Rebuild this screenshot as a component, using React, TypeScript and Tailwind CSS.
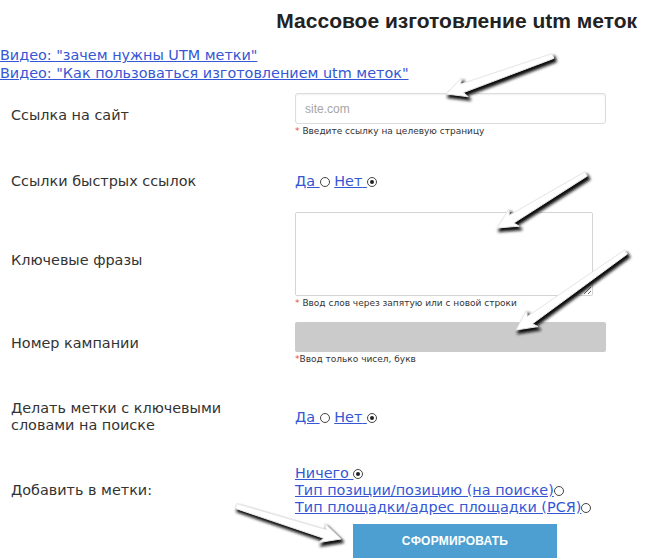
import React from "react";

const LINK = "text-[#3557d4] underline";
const BODY = "font-['DejaVu_Sans',Verdana,sans-serif]";

type ArrowProps = { x1: number; y1: number; x2: number; y2: number };

const arrowPoints = ({ x1, y1, x2, y2 }: ArrowProps) => {
  const dx = x2 - x1;
  const dy = y2 - y1;
  const len = Math.hypot(dx, dy);
  const ux = dx / len;
  const uy = dy / len;
  const nx = -uy;
  const ny = ux;
  const at = (d: number, w: number) =>
    `${(x1 + ux * d + nx * w).toFixed(1)},${(y1 + uy * d + ny * w).toFixed(1)}`;
  return [
    at(0, 2.5),
    at(len - 17, 4.5),
    at(len - 20, 10),
    at(len, 0),
    at(len - 20, -10),
    at(len - 17, -4.5),
    at(0, -2.5),
  ].join(" ");
};

const ARROWS: ArrowProps[] = [
  { x1: 553, y1: 56, x2: 446, y2: 94 },
  { x1: 586, y1: 174, x2: 497, y2: 228 },
  { x1: 626, y1: 252, x2: 516, y2: 330 },
  { x1: 236, y1: 506, x2: 341, y2: 539 },
];

const Arrows = () => {
  return (
    <svg className="absolute inset-0 pointer-events-none" width={650} height={559}>
      <defs>
        <filter id="blur" x="-20%" y="-20%" width="140%" height="140%">
          <feGaussianBlur stdDeviation="1.4" />
        </filter>
      </defs>
      {ARROWS.map((a, i) => (
        <g key={i}>
          <polygon
            points={arrowPoints(a)}
            transform="translate(2 3)"
            fill="#111"
            stroke="#111"
            strokeWidth={2}
            strokeLinejoin="round"
            filter="url(#blur)"
          />
          <polygon
            points={arrowPoints(a)}
            fill="#ffffff"
            stroke="#e6e6e6"
            strokeWidth={1}
            strokeLinejoin="round"
          />
        </g>
      ))}
    </svg>
  );
};

const Radio = ({ checked }: { checked?: boolean }) => {
  return (
    <span className="relative inline-block w-[10px] h-[10px] rounded-full border border-[#444] align-[-1px] bg-white">
      {checked && <span className="absolute left-[2px] top-[2px] w-[4px] h-[4px] rounded-full bg-[#222]" />}
    </span>
  );
};

const YesNo = () => {
  return (
    <div className="text-[14.4px] leading-[18px]">
      <a href="#" className={LINK}>
        Да{" "}
      </a>
      <Radio />{" "}
      <a href="#" className={LINK}>
        Нет{" "}
      </a>
      <Radio checked />
    </div>
  );
};

const Hint = ({ text, spaced = true }: { text: string; spaced?: boolean }) => {
  return (
    <div className="mt-[2px] text-[9px] leading-[11px] text-[#333]">
      <span className="text-[#e05050]">*</span>
      {spaced ? " " : ""}
      {text}
    </div>
  );
};

const Row = ({ label, children, className }: { label: React.ReactNode; children: React.ReactNode; className?: string }) => {
  return (
    <div className={`grid grid-cols-[295px_1fr] items-center ${className ?? ""}`}>
      <div className="pl-[11px] text-[14.4px] leading-[17px] text-[#333]">{label}</div>
      <div>{children}</div>
    </div>
  );
};

const App = () => {
  return (
    <div className={`relative w-[650px] h-[559px] overflow-hidden bg-white ${BODY}`}>
      <div className="flex justify-end pr-[13px] pt-[10px]">
        <h1 className="font-['Liberation_Sans',Arial,sans-serif] font-bold text-[21px] leading-[22px] text-[#222]">
          Массовое изготовление utm меток
        </h1>
      </div>

      <div className="mt-[14px] flex flex-col items-start text-[14.4px] leading-[18px]">
        <a href="#" className={LINK}>
          Видео: "зачем нужны UTM метки"
        </a>
        <a href="#" className={LINK}>
          Видео: "Как пользоваться изготовлением utm меток"
        </a>
      </div>

      <div className="flex flex-col">
        <Row label="Ссылка на сайт" className="mt-[11px]">
          <input
            type="text"
            placeholder="site.com"
            className="block w-[311px] h-[31px] px-[9px] border border-[#dcdcdc] rounded-[3px] shadow-[inset_0_1px_2px_rgba(0,0,0,0.06)] font-['Liberation_Sans',Arial,sans-serif] text-[12px] placeholder:text-[#a5a5a5] outline-none"
          />
          <Hint text="Введите ссылку на целевую страницу" />
        </Row>

        <Row label="Ссылки быстрых ссылок" className="mt-[35px]">
          <YesNo />
        </Row>

        <Row label="Ключевые фразы" className="mt-[22px]">
          <textarea className="block w-[298px] h-[84px] border border-[#d4d4d4] rounded-[2px] outline-none" />
          <Hint text="Ввод слов через запятую или с новой строки" />
        </Row>

        <Row label="Номер кампании" className="mt-[13px]">
          <div className="w-[311px] h-[30px] rounded-[2px] bg-[#cbcbcb]" />
          <Hint text="Ввод только чисел, букв" spaced={false} />
        </Row>

        <Row
          label={<div className="w-[230px]">Делать метки с ключевыми словами на поиске</div>}
          className="mt-[35px]"
        >
          <YesNo />
        </Row>

        <Row label="Добавить в метки:" className="mt-[31px]">
          <div className="text-[14.4px] leading-[17px]">
            <div>
              <a href="#" className={LINK}>
                Ничего{" "}
              </a>
              <Radio checked />
            </div>
            <div>
              <a href="#" className={LINK}>
                Тип позиции/позицию (на поиске)
              </a>
              <Radio />
            </div>
            <div>
              <a href="#" className={LINK}>
                Тип площадки/адрес площадки (РСЯ)
              </a>
              <Radio />
            </div>
          </div>
        </Row>

        <div className="mt-[8px] pl-[353px]">
          <button className="w-[204px] h-[34px] bg-[#4c9fd0] text-white font-['Liberation_Sans',Arial,sans-serif] font-bold text-[12px] tracking-[0.2px]">
            СФОРМИРОВАТЬ
          </button>
        </div>
      </div>

      <Arrows />
    </div>
  );
};

export default App;
